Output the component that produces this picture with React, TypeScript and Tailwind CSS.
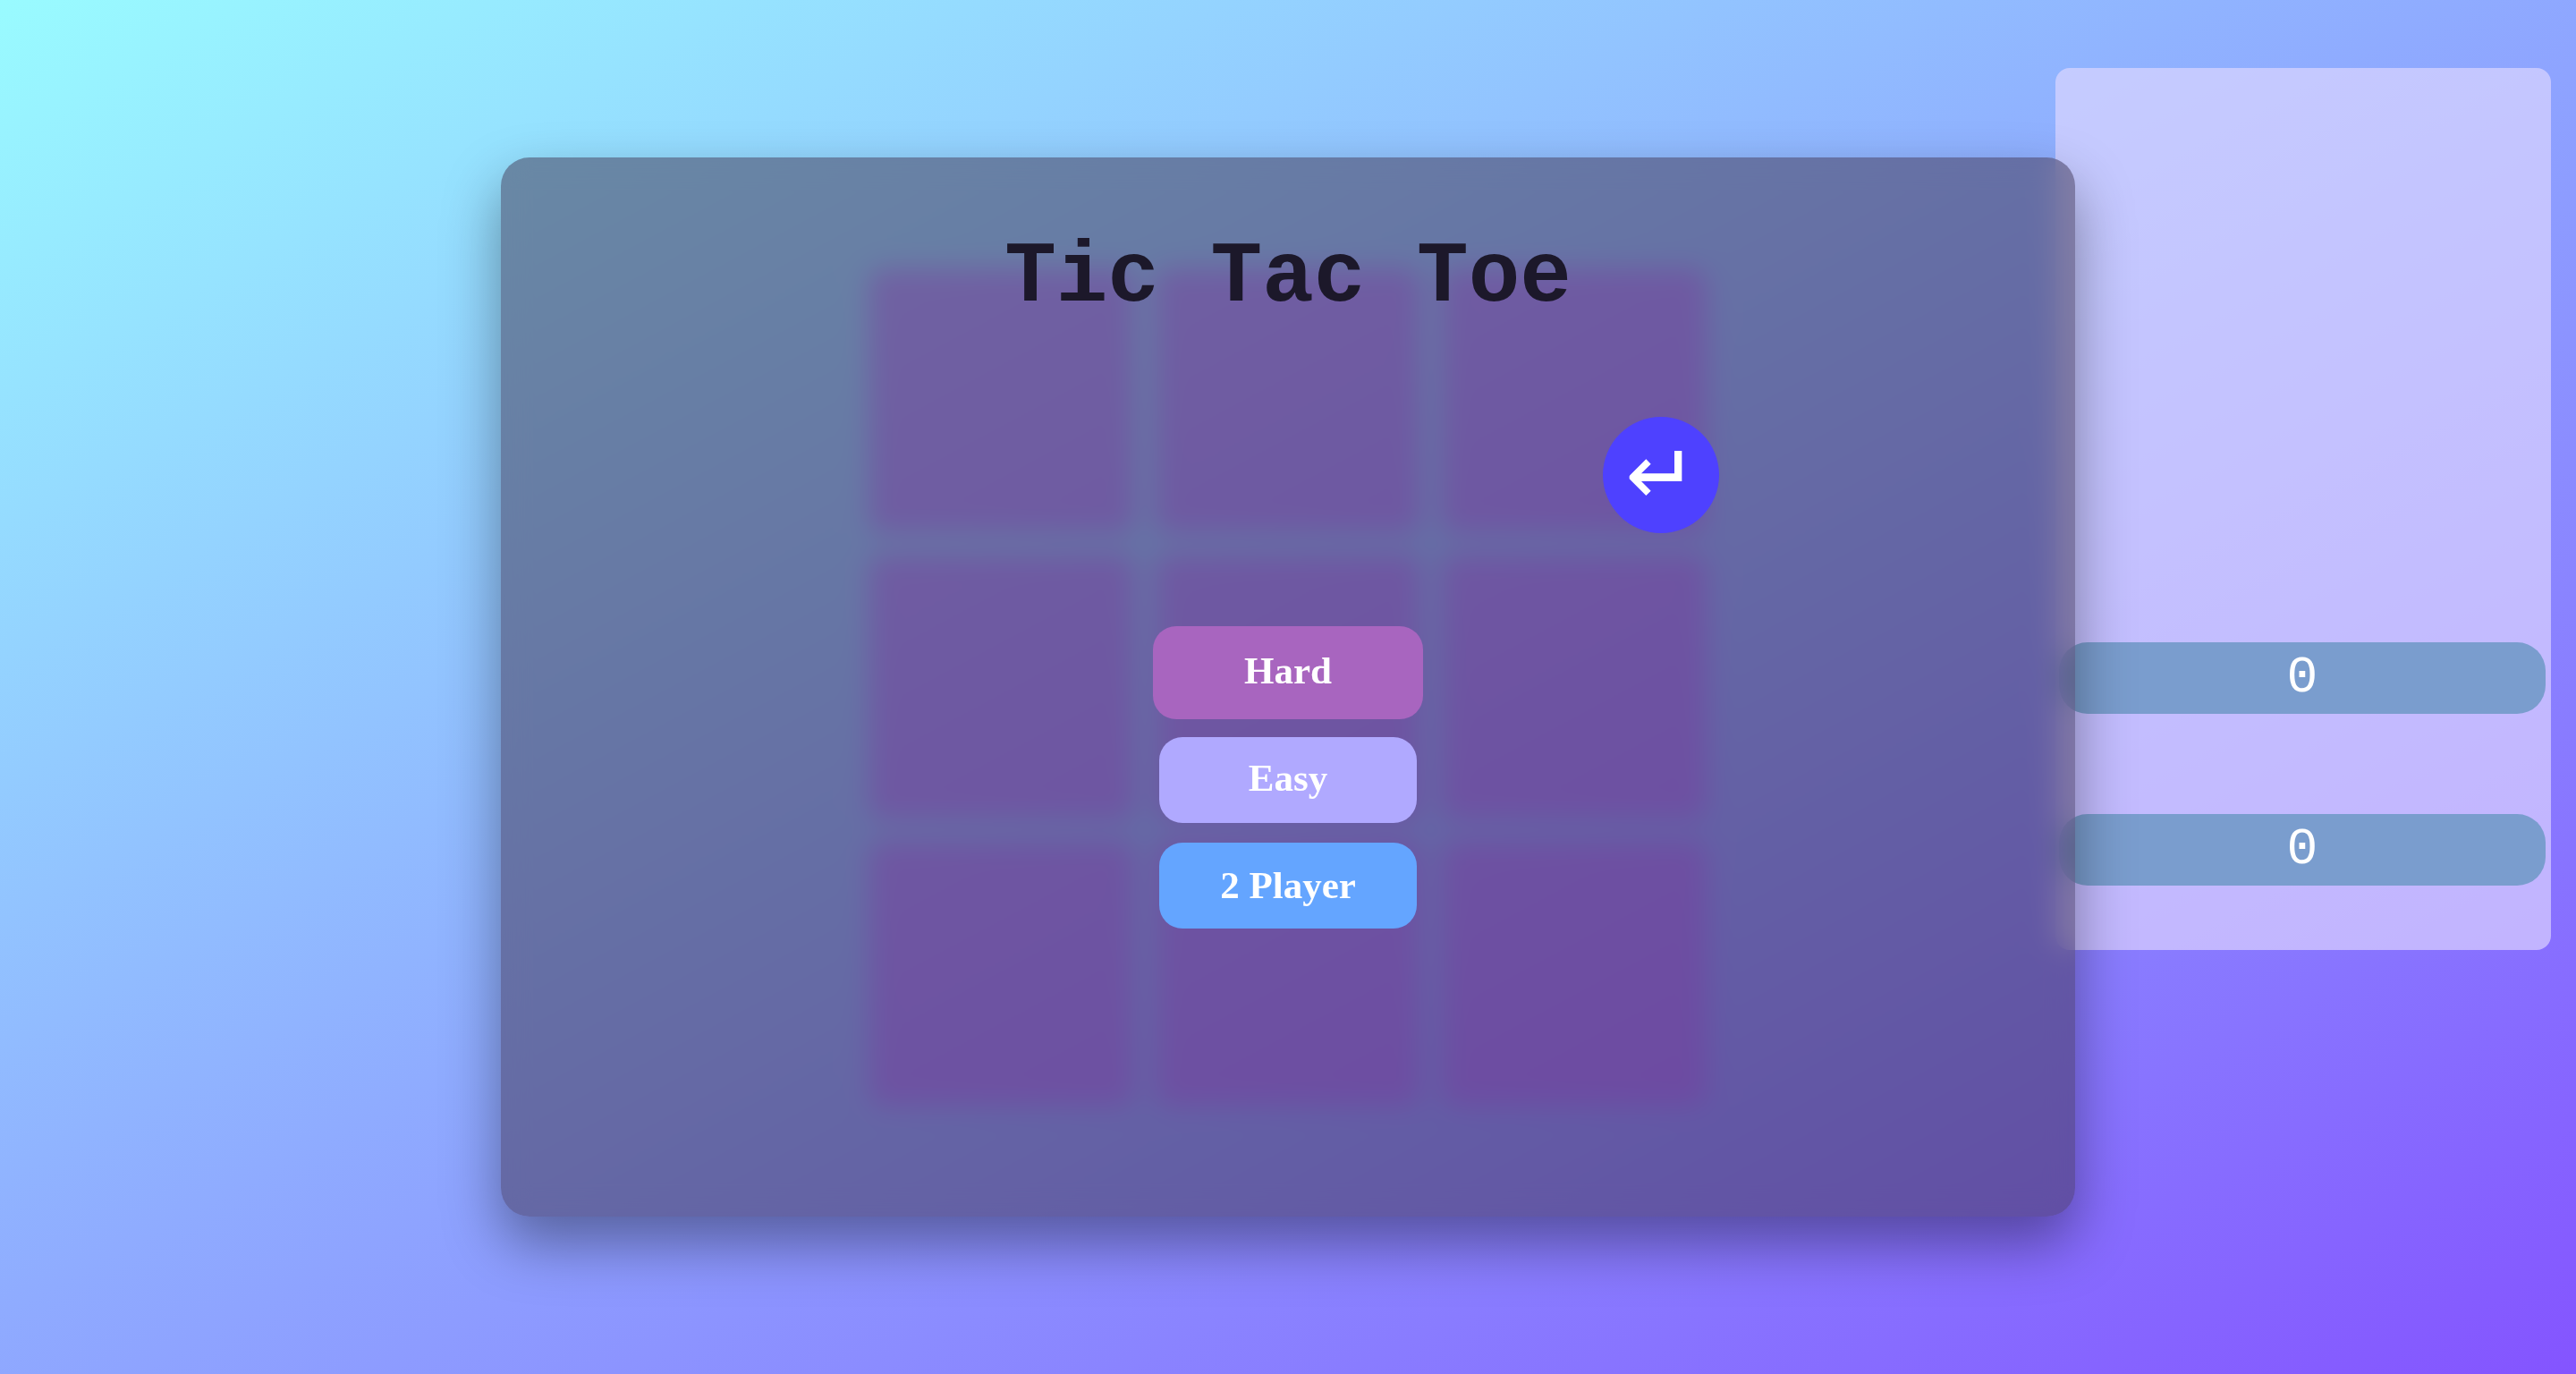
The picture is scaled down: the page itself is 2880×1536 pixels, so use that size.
import { useState } from "react";

type Mode = "hard" | "easy" | "two";

function Board() {
  const cells = Array.from({ length: 9 }, (_, i) => i);
  return (
    <div className="col-start-2 grid grid-cols-3 gap-6 self-center">
      {cells.map((i) => (
        <button
          key={i}
          type="button"
          aria-label={`Cell ${i + 1}`}
          className="size-[296px] rounded-2xl bg-[#bc3cf0]/40"
        />
      ))}
    </div>
  );
}

function Score({ value, label }: { value: number; label: string }) {
  return (
    <p
      aria-label={label}
      className="flex h-20 items-center justify-center rounded-[32px] bg-[#7a9dce] font-['Liberation_Mono',monospace] text-[58px] leading-[66px] text-white"
    >
      {value}
    </p>
  );
}

function ScorePanel() {
  return (
    <aside className="col-start-3 mt-[76px] mr-7 flex min-h-[986px] w-[554px] flex-col justify-end gap-28 self-start justify-self-end rounded-2xl bg-[#e2d8ff]/65 pr-1.5 pb-[72px] pl-1">
      <Score value={0} label="Player X score" />
      <Score value={0} label="Player O score" />
    </aside>
  );
}

function BackButton() {
  return (
    <button type="button" aria-label="Back" className="size-[130px] rounded-full bg-[#4e41ff] text-white">
      <svg viewBox="0 0 390 390" fill="currentColor" className="size-full" aria-hidden="true">
        <path d="M240 114H265V216H129L161 248L145 264L91 210Q89 208 89 206V200Q89 198 91 196L145 142L161 158L129 190H240Z" />
      </svg>
    </button>
  );
}

function ModeDialog({ onPick }: { onPick: (mode: Mode) => void }) {
  const text = "rounded-[26px] font-['Liberation_Serif',serif] text-[43px] leading-[48px] font-bold text-white";
  return (
    <section
      role="dialog"
      aria-labelledby="title"
      className="absolute top-1/2 left-1/2 flex min-h-[1184px] w-[1760px] max-w-full -translate-x-1/2 -translate-y-1/2 flex-col items-center rounded-[32px] bg-[#3b304b]/50 pt-[87px] shadow-[0_30px_64px_rgba(0,0,0,0.38)] backdrop-blur-[15px]"
    >
      <h1
        id="title"
        className="font-['Liberation_Mono',monospace] text-8xl leading-none font-bold text-[#1c182a]"
      >
        Tic Tac Toe
      </h1>
      <div className="mt-[107px] flex w-[964px] justify-end">
        <BackButton />
      </div>
      <div className="mt-[104px] flex flex-col items-center">
        <button type="button" onClick={() => onPick("hard")} className={`h-[104px] w-[302px] bg-[#a865bf] pb-1 ${text}`}>
          Hard
        </button>
        <button type="button" onClick={() => onPick("easy")} className={`mt-5 h-24 w-72 bg-[#b0a9ff] pb-1 ${text}`}>
          Easy
        </button>
        <button type="button" onClick={() => onPick("two")} className={`mt-[22px] h-24 w-72 bg-[#64a5ff] ${text}`}>
          2 Player
        </button>
      </div>
    </section>
  );
}

export default function App() {
  const [, setMode] = useState<Mode | null>(null);
  return (
    <main className="relative grid min-h-screen grid-cols-[1fr_auto_1fr] overflow-hidden bg-[linear-gradient(to_bottom_right,#99fbff,#8454ff)]">
      <Board />
      <ScorePanel />
      <ModeDialog onPick={setMode} />
    </main>
  );
}
